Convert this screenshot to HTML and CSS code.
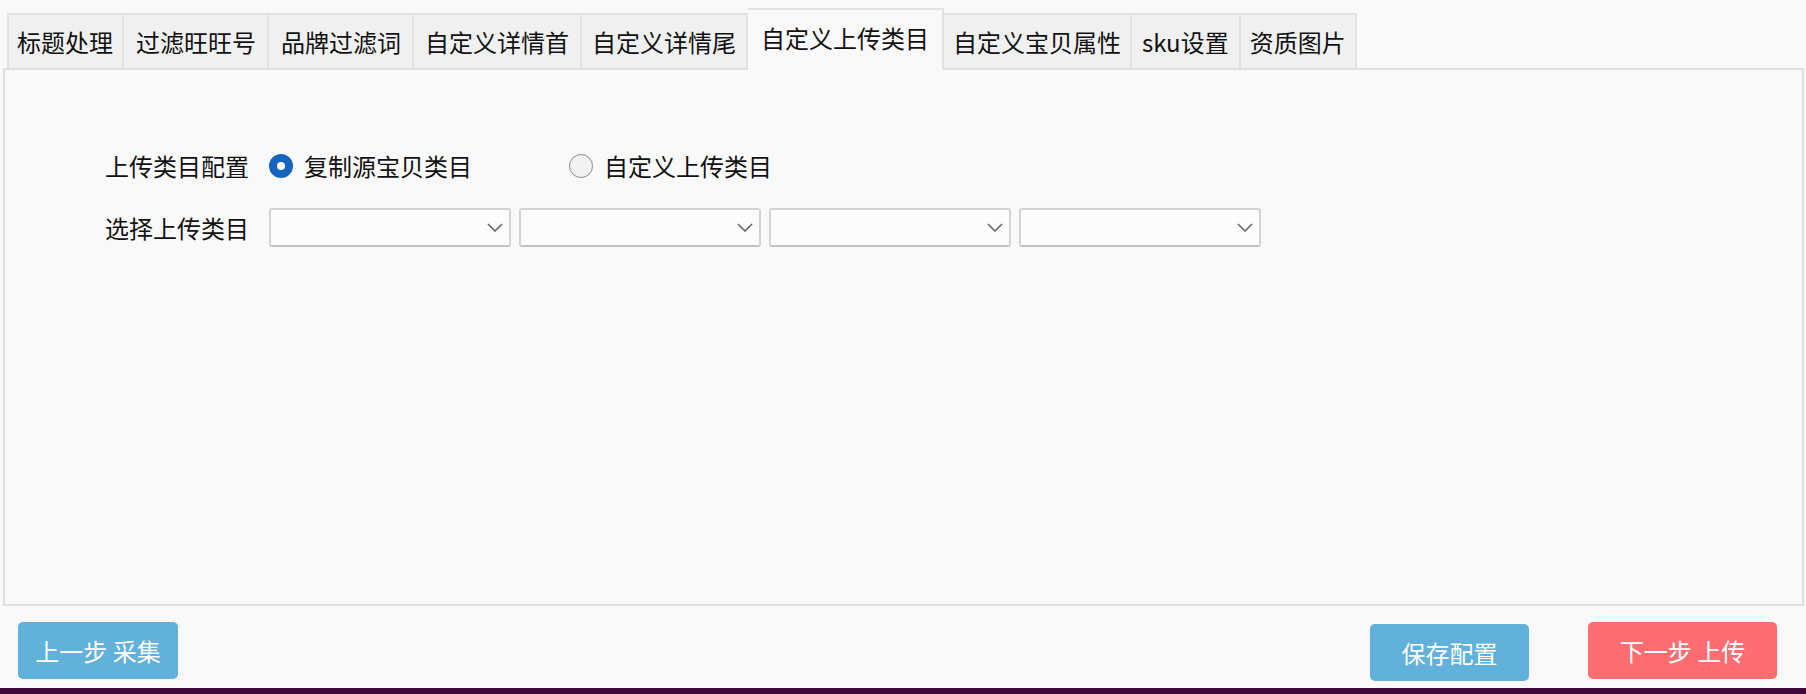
FILE: index.html
```html
<!DOCTYPE html>
<html lang="zh-CN">
<head>
    <meta charset="UTF-8">
    <meta name="viewport" content="width=device-width, initial-scale=1.0">
    <title>上传设置</title>
    <link rel="stylesheet" href="styles.css">
</head>
<body>

<div class="tabs">
    <div class="tab first">标题处理</div>
    <div class="tab wide">过滤旺旺号</div>
    <div class="tab wide">品牌过滤词</div>
    <div class="tab mid">自定义详情首</div>
    <div class="tab">自定义详情尾</div>
    <div class="tab active">自定义上传类目</div>
    <div class="tab narrow">自定义宝贝属性</div>
    <div class="tab">sku设置</div>
    <div class="tab narrow">资质图片</div>
</div>

<div class="panel">
    <div class="form">
        <div class="row">
            <span class="label">上传类目配置</span>
            <label class="radio-opt first-opt">
                <span class="radio checked"></span>
                <span>复制源宝贝类目</span>
            </label>
            <label class="radio-opt">
                <span class="radio"></span>
                <span>自定义上传类目</span>
            </label>
        </div>
        <div class="row row-select">
            <span class="label">选择上传类目</span>
            <div class="selects">
                <div class="select">
                    <svg width="16" height="9" viewBox="0 0 16 9"><path d="M1 1 L8 8 L15 1" fill="none" stroke="#666" stroke-width="1.6"/></svg>
                </div>
                <div class="select">
                    <svg width="16" height="9" viewBox="0 0 16 9"><path d="M1 1 L8 8 L15 1" fill="none" stroke="#666" stroke-width="1.6"/></svg>
                </div>
                <div class="select">
                    <svg width="16" height="9" viewBox="0 0 16 9"><path d="M1 1 L8 8 L15 1" fill="none" stroke="#666" stroke-width="1.6"/></svg>
                </div>
                <div class="select">
                    <svg width="16" height="9" viewBox="0 0 16 9"><path d="M1 1 L8 8 L15 1" fill="none" stroke="#666" stroke-width="1.6"/></svg>
                </div>
            </div>
        </div>
    </div>
</div>

<div class="footer">
    <button class="btn btn-prev">上一步 采集</button>
    <div class="spacer"></div>
    <button class="btn btn-save">保存配置</button>
    <button class="btn btn-next">下一步 上传</button>
</div>

<div class="taskbar"></div>

</body>
</html>
```

FILE: styles.css
```css
* {
    box-sizing: border-box;
}

body {
    font-family: "Noto Sans CJK SC", "Noto Sans", sans-serif;
    font-size: 24px;
    color: #111;
    margin: 0;
    width: 1806px;
    height: 694px;
    overflow: hidden;
    background: #f9f9f9;
    display: flex;
    flex-direction: column;
}

.tabs {
    display: flex;
    align-items: flex-end;
    height: 68px;
    padding-left: 7px;
}

.tab {
    height: 55px;
    padding: 0 10px;
    display: flex;
    align-items: center;
    line-height: 1;
    background: #f0f0f0;
    border-top: 2px solid #e2e2e2;
    border-right: 2px solid #e2e2e2;
    white-space: nowrap;
}

.tab.first {
    padding: 0 9px 0 8px;
    border-left: 2px solid #e2e2e2;
}

.tab.wide {
    padding: 0 11px 0 12px;
}

.tab.mid {
    padding: 0 11px;
}

.tab.narrow {
    padding: 0 9px;
}

.tab.active {
    height: 62px;
    margin-bottom: -2px;
    padding: 0 13px 4px;
    background: #f9f9f9;
    position: relative;
    z-index: 1;
}

.panel {
    height: 538px;
    margin: 0 2px 0 3px;
    border: 2px solid #e0e0e0;
    background: #f9f9f9;
}

.form {
    padding: 79px 0 0 100px;
}

.row {
    display: flex;
    align-items: center;
    height: 34px;
    line-height: 1;
}

.row-select {
    height: 39px;
    margin-top: 25px;
}

.label {
    margin-right: 20px;
    white-space: nowrap;
}

.radio-opt {
    display: flex;
    align-items: center;
    gap: 11px;
}

.first-opt {
    margin-right: 97px;
}

.radio {
    width: 24px;
    height: 24px;
    border-radius: 50%;
    border: 1.5px solid #8a8a8a;
    background: #f3f3f3;
}

.radio.checked {
    border: 8px solid #1565c0;
    background: #fff;
}

.selects {
    display: flex;
    gap: 8px;
}

.select {
    width: 242px;
    height: 39px;
    border: 2px solid #d3d3d3;
    border-bottom-color: #c2c2c2;
    border-radius: 3px;
    background: #fcfcfc;
    display: flex;
    align-items: center;
    justify-content: flex-end;
    padding-right: 6px;
}

.footer {
    height: 82px;
    display: flex;
    align-items: flex-start;
    padding: 16px 29px 0 18px;
}

.spacer {
    flex: 1;
}

.btn {
    height: 57px;
    border: none;
    border-radius: 5px;
    color: #fff;
    font-family: inherit;
    font-size: 24px;
    line-height: 1;
    padding: 0;
    cursor: pointer;
}

.btn-prev {
    width: 160px;
    background: #62b1db;
}

.btn-save {
    width: 159px;
    margin-top: 2px;
    background: #62b1db;
}

.btn-next {
    width: 189px;
    margin-left: 59px;
    background: #fe6d71;
}

.taskbar {
    height: 6px;
    background: #3d0a3b;
}
```
